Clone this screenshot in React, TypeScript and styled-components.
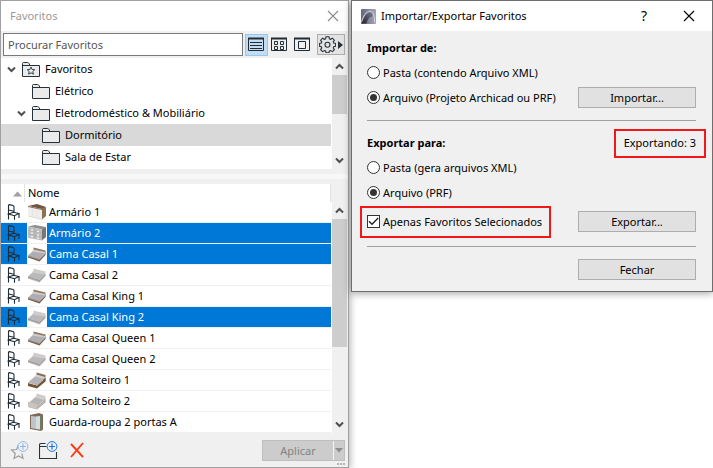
import React from 'react';
import styled, { createGlobalStyle, css } from 'styled-components';

const GlobalStyle = createGlobalStyle`
  *, *::before, *::after { box-sizing: border-box; }
  body { margin: 0; background: #fff; }
  body, button, input { font: 11px/16px "Noto Sans", "Open Sans", sans-serif; color: #000; }
  button { padding: 0; margin: 0; }
  svg { display: block; flex: none; }
`;

const Desktop = styled.main`
  display: flex;
  align-items: flex-start;
  gap: 2px;
  overflow: hidden;
  padding-bottom: 1px;
`;

const Window = styled.section<{ $share: number; $edge: string }>`
  flex: ${(p) => p.$share} 1 0;
  min-width: 0;
  border: 1px solid ${(p) => p.$edge};
  background: #f0f0f0;
  box-shadow: 0 1px 8px rgba(0, 0, 0, 0.4);
`;

const TitleBar = styled.header<{ $inactive?: boolean }>`
  display: flex;
  align-items: center;
  height: 30px;
  padding: 0 8px 0 9px;
  background: #fff;
  color: ${(p) => (p.$inactive ? '#999' : '#000')};
`;

const Title = styled.h1`
  flex: 1;
  margin: 0;
  font: inherit;
  white-space: nowrap;
`;

const TitleButton = styled.button`
  display: grid;
  place-items: center;
  width: 14px;
  height: 20px;
  border: 0;
  background: none;
  color: inherit;
  font-size: 14px;
`;

const DialogButtons = styled.div`
  display: flex;
  gap: 31px;
  margin-right: 8px;
`;

const LogoWrap = styled.span`
  margin-right: 5px;
`;

const Toolbar = styled.div`
  display: flex;
  align-items: center;
  height: 27px;
  padding: 0 3px 0 2px;
`;

const Search = styled.input`
  flex: 1;
  min-width: 0;
  height: 23px;
  margin-right: 2px;
  padding: 0 4px;
  border: 1px solid #7a7a7a;
  background: #fff;
  &::placeholder { color: #555; opacity: 1; }
`;

const ViewButton = styled.button<{ $active?: boolean }>`
  display: grid;
  place-items: center;
  width: 23px;
  height: 22px;
  border: 1px solid ${(p) => (p.$active ? '#90c8f6' : 'transparent')};
  background: ${(p) => (p.$active ? '#c3dcf2' : 'none')};
`;

const GearButton = styled.button`
  display: flex;
  align-items: center;
  justify-content: center;
  gap: 2px;
  width: 28px;
  height: 21px;
  margin-left: 3px;
  border: 1px solid #adadad;
  background: #e3e3e3;
`;

const ScrollArea = styled.div`
  display: flex;
  background: #fff;
`;

const Tree = styled.ul`
  flex: 1;
  min-width: 0;
  margin: 0 1px 1px 0;
  padding: 0;
  list-style: none;
`;

const TreeRow = styled.li<{ $level: number; $selected?: boolean }>`
  display: grid;
  grid-template-columns: 15px 23px 1fr;
  align-items: center;
  height: 22px;
  padding-left: ${(p) => 6 + p.$level * 10}px;
  background: ${(p) => (p.$selected ? '#d9d9d9' : 'none')};
  white-space: nowrap;
`;

const ScrollTrack = styled.div`
  display: flex;
  flex-direction: column;
  width: 16px;
  padding-right: 1px;
  background: #f0f0f0;
`;

const ScrollButton = styled.button`
  display: grid;
  place-items: center;
  height: 17px;
  border: 0;
  background: none;
`;

const ScrollThumb = styled.div<{ $size: number }>`
  flex: ${(p) => p.$size} 1 0;
  background: #cdcdcd;
`;

const ScrollRest = styled.div<{ $size: number }>`
  flex: ${(p) => p.$size} 1 0;
`;

const Splitter = styled.div`
  height: 15px;
  border: solid #f0f0f0;
  border-width: 5px 0;
  background: #f8f8f8;
`;

const ListHeader = styled.div`
  display: grid;
  grid-template-columns: 24px 1fr 17px;
  height: 18px;
  background: #fff;
`;

const SortCell = styled.button`
  display: flex;
  justify-content: flex-end;
  align-items: center;
  padding: 2px 2px 0 0;
  border: 0;
  border-right: 1px solid #e3e3e3;
  background: none;
`;

const HeaderCell = styled.span`
  padding: 1px 3px;
  border-right: 1px solid #e3e3e3;
`;

const HeaderCorner = styled.span`
  background: #f0f0f0;
`;

const ItemTable = styled.table`
  flex: 1;
  min-width: 0;
  margin-right: 1px;
  border-collapse: separate;
  border-spacing: 0;
  table-layout: fixed;
`;

const IconCell = styled.td`
  width: 26px;
  height: 21px;
  padding: 0 0 0 6px;
  border-bottom: 1px solid #f0f0f0;
`;

const ThumbCell = styled.td`
  width: 20px;
  padding: 0;
  border-bottom: 1px solid #f0f0f0;
  background: #fff;
`;

const NameCell = styled.td`
  padding: 0 2px;
  border-bottom: 1px solid #f0f0f0;
  white-space: nowrap;
`;

const ItemRow = styled.tr<{ $selected?: boolean }>`
  ${(p) =>
    p.$selected &&
    css`
      ${IconCell}, ${NameCell} { background: #0078d7; }
      ${NameCell} { color: #fff; }
    `}
`;

const Footer = styled.footer`
  position: relative;
  display: flex;
  align-items: center;
  gap: 11px;
  height: 34px;
  padding: 0 3px 0 9px;
`;

const ToolButton = styled.button`
  display: grid;
  place-items: center;
  width: 18px;
  height: 20px;
  border: 0;
  background: none;
`;

const ApplyButton = styled.button`
  display: flex;
  align-items: stretch;
  width: 83px;
  height: 21px;
  margin-left: auto;
  border: 1px solid #bfbfbf;
  background: #ccc;
  color: #838383;
  line-height: 19px;
`;

const ApplyText = styled.span`
  flex: 1;
  border-right: 1px solid #f4f4f4;
`;

const ApplyArrow = styled.span`
  display: grid;
  place-items: center;
  width: 10px;
`;

const Grip = styled.span`
  position: absolute;
  right: 3px;
  bottom: 2px;
`;

const DialogBody = styled.form`
  padding: 4px 15px 11px;
  padding-right: 16px;
`;

const Group = styled.div<{ $last?: boolean }>`
  padding-bottom: ${(p) => (p.$last ? 8 : 10)}px;
  margin-bottom: ${(p) => (p.$last ? 12 : 9)}px;
  border-bottom: 1px solid #a0a0a0;
`;

const FormRow = styled.div<{ $tall?: boolean }>`
  display: flex;
  align-items: center;
  justify-content: space-between;
  height: ${(p) => (p.$tall ? 33 : 25)}px;
`;

const GroupTitle = styled.h2`
  margin: 0;
  font-size: 11px;
  line-height: 16px;
  font-weight: 700;
`;

const Choice = styled.label`
  display: flex;
  align-items: center;
  gap: 3px;
  white-space: nowrap;
`;

const RadioInput = styled.input`
  appearance: none;
  display: grid;
  place-items: center;
  width: 13px;
  height: 13px;
  margin: 0;
  border: 1px solid #333;
  border-radius: 50%;
  background: #fff;
  &:checked::before {
    content: '';
    width: 7px;
    height: 7px;
    border-radius: 50%;
    background: #333;
  }
`;

const CheckInput = styled.input`
  appearance: none;
  display: grid;
  place-items: center;
  width: 13px;
  height: 13px;
  margin: 0;
  border: 1px solid #333;
  background: #fff;
  &:checked::before {
    content: '';
    width: 11px;
    height: 11px;
    background: #222;
    clip-path: polygon(4% 52%, 13% 43%, 36% 66%, 88% 14%, 97% 23%, 36% 84%);
  }
`;

const Marked = styled.div<{ $wide?: boolean }>`
  position: relative;
  &::after {
    content: '';
    position: absolute;
    inset: ${(p) => (p.$wide ? '-8px -9px -8px -7px' : '-6px -10px -7px')};
    border: 2px solid #f01818;
    pointer-events: none;
  }
`;

const PushButton = styled.button`
  width: 118px;
  height: 21px;
  border: 1px solid #adadad;
  background: #e1e1e1;
  line-height: 19px;
`;

const Actions = styled.div`
  display: flex;
  justify-content: flex-end;
`;

const CloseIcon = ({ color }: { color: string }) => (
  <svg width="12" height="12" viewBox="0 0 12 12" stroke={color} strokeWidth="1.1">
    <path d="M1 1l10 10M11 1L1 11" />
  </svg>
);

const Chevron = ({ up }: { up?: boolean }) => (
  <svg width="9" height="7" viewBox="0 0 9 7" fill="none" stroke="#505050" strokeWidth="2">
    <path d={up ? 'M1 5.5l3.5-3.5L8 5.5' : 'M1 1.5L4.5 5 8 1.5'} />
  </svg>
);

const FolderIcon = ({ star }: { star?: boolean }) => (
  <svg width="18" height="15" viewBox="0 0 18 15" fill="#ebebeb" stroke="#26323a">
    <path d="M.5 14.5V1.5Q.5.5 1.5.5H5.500Q6.500.5 7 1.500L8 3.500H17.500V14.500Z" />
    <path d="M.5 3.500H8" />
    {star && (
      <path
        d="M9 5l1.100 2.500 2.700.2-2 1.800.6 2.700L9 10.800l-2.400 1.400.6-2.700-2-1.800 2.700-.2z"
        strokeWidth=".9"
      />
    )}
  </svg>
);

const ViewIcon = ({ kind }: { kind: 'list' | 'grid' | 'single' }) => (
  <svg width="17" height="15" viewBox="0 0 17 15" fill="none" stroke="#1f2c35">
    <path d="M.5 1.500h15v12H.5z" />
    <path d="M0 1.500h16" strokeWidth="2" />
    {kind === 'list' && <path d="M2 5.500h12M2 8.500h12M2 11.500h12" />}
    {kind === 'grid' && (
      <path d="M3.500 4.500h3v3h-3zM9.500 4.500h3v3h-3zM3.500 9.500h3v3h-3zM9.500 9.500h3v3h-3z" />
    )}
    {kind === 'single' && <path d="M4.500 4.500h7v7h-7z" />}
  </svg>
);

const GearIcon = () => (
  <svg width="17" height="17" viewBox="0 0 17 17" fill="none" stroke="#26323a">
    <path
      d="M7 .8h3l.4 2 1.200.5 1.800-1.100 2 2-1.200 1.700.5 1.200 1.900.4v2.800l-1.900.4-.5 1.200 1.200 1.700-2 2-1.800-1.100-1.200.5-.4 1.700H7l-.4-1.700-1.200-.5-1.800 1.100-2-2 1.200-1.700-.5-1.200L.6 10.300V7.500l1.700-.4.5-1.200L1.600 4.200l2-2 1.800 1.100 1.200-.5z"
      strokeWidth="1.100"
    />
    <circle cx="8.500" cy="8.800" r="2.500" strokeWidth="1.100" />
  </svg>
);

const ChairIcon = () => (
  <svg width="13" height="16" viewBox="0 0 13 16" fill="none" stroke="#1f2c35" strokeWidth="1.100">
    <path d="M1.500 15.500V1.500Q1.600.6 2.500.6L6 1.500Q7 1.900 7 3V8.500" />
    <path d="M1.500 6L7 7.300" />
    <path d="M1.500 10L6.500 8.300 12 9.500 7.500 11.700ZM7.500 11.700V15.800M12 9.500V14" />
  </svg>
);

type ThumbKind = 'cabinet' | 'dresser' | 'woodBed' | 'grayBed' | 'woodSingle' | 'graySingle' | 'wardrobe';

const DoubleBed = ({ wood }: { wood: boolean }) => (
  <>
    <path d="M6.500 3.500L18.500 6.500V10L6.500 8z" fill={wood ? '#94795e' : '#d3cbc3'} />
    <path d="M1 11.500L12.500 15 18.500 9.500V11L12.500 17.500 1 13.500z" fill={wood ? '#7c5f42' : '#bdb4ad'} />
    <path d="M1 11.500L6.500 6.500 18.500 9 12.500 15z" fill={wood ? '#adadb3' : '#b9b9bb'} />
    <path d="M6.500 5.500L18 8v1.500L5 7.500z" fill="#cdcdd0" />
    <path d="M1 11.500L12.500 15 18.500 9v1L12.500 16 1 12.500z" fill="#96969b" />
  </>
);

const SingleBed = ({ wood }: { wood: boolean }) => (
  <>
    <path d="M9.500 2.500L18.500 5V11L9.500 8z" fill={wood ? '#8a6c50' : '#d3cbc3'} />
    <path d="M1 13L10 15.500 18.500 8V11.500L10 18.500 1 16z" fill={wood ? '#745538' : '#b8afa8'} />
    <path d="M1 12.500L9.500 5 18.500 7.500 10 15.500z" fill={wood ? '#b3b3b8' : '#b5b5b8'} />
    <path d="M9.500 4.500L18 7l-1.500 2L8 6.500z" fill="#cfcfd2" />
    {!wood && <path d="M1 10.500L10 13v5L1 16z" fill="#cbc3bc" />}
  </>
);

const Thumb = ({ kind }: { kind: ThumbKind }) => (
  <svg width="20" height="20" viewBox="0 0 20 20">
    {kind === 'cabinet' && (
      <>
        <path d="M1 4L10 2l9 3-4 2.500z" fill="#6f573f" />
        <path d="M15 7l4-2V14l-4 3.500z" fill="#8b7153" />
        <path d="M1 4l14 3v10.500L1.500 14z" fill="#f0eeec" />
        <path d="M1 4l14 3v1L1 5z" fill="#8b735a" />
        <path d="M5.500 6v8.500M10 7v8.500" stroke="#e2dfdc" strokeWidth=".7" />
        <path d="M1.500 14L15 17.500" stroke="#d0cbc6" strokeWidth=".7" />
      </>
    )}
    {kind === 'dresser' && (
      <>
        <path d="M1 3.500L8 2l11 2-3 2.500z" fill="#8e8e8e" />
        <path d="M15 6.500l4-2.500V14l-4 3.500z" fill="#777" />
        <path d="M1 3.500L15 6.500v11L1 15z" fill="#bebebe" />
        <path d="M1.500 7.500l13.500 2.500M1.500 11l13.500 2.500M8 5v11" stroke="#a4a4a4" strokeWidth=".5" />
        <path d="M4 7l2 .3M10 8.500l2 .3M4 10l2 .3M10 12l2 .3M4 13.500l2 .3M10 15l2 .3" stroke="#fff" />
      </>
    )}
    {kind === 'wardrobe' && (
      <>
        <path d="M3 3l9-2 4 1.500v15L14 19 3 17z" fill="#816956" />
        <path d="M4 4l5 .5v12.500L4 16z" fill="#bfc4c8" />
        <path d="M9 4.500l4-.5v13.500L9 17z" fill="#d8dcdf" />
        <path d="M13.500 4l.8-.5v14l-.8.5z" fill="#4e9b70" />
      </>
    )}
    {(kind === 'woodBed' || kind === 'grayBed') && <DoubleBed wood={kind === 'woodBed'} />}
    {(kind === 'woodSingle' || kind === 'graySingle') && <SingleBed wood={kind === 'woodSingle'} />}
  </svg>
);

const LogoIcon = () => (
  <svg width="15" height="15" viewBox="0 0 15 15">
    <defs>
      <linearGradient id="logoFill" x1="0" y1="0" x2="1" y2="0">
        <stop offset="0" stopColor="#66667c" />
        <stop offset="1" stopColor="#a3a5b8" />
      </linearGradient>
      <linearGradient id="logoArch" x1="0" y1="1" x2="1" y2="0">
        <stop offset="0" stopColor="#24242c" />
        <stop offset="1" stopColor="#77778a" />
      </linearGradient>
    </defs>
    <rect width="15" height="15" rx="1" fill="url(#logoFill)" />
    <path d="M.5 14.500C3 8 5.500 3.500 9.500 3.500c1.500.5 2 2 2 4C8 7.500 6.500 11 5.500 14.500z" fill="url(#logoArch)" />
    <path d="M.5 13C2.500 7 5 2.300 9 2.200c3.500.1 4.300 4 4.500 11.300" fill="none" stroke="#dcdce6" strokeWidth=".9" />
  </svg>
);

const AddBadge = () => (
  <>
    <circle cx="13" cy="5.500" r="4.900" fill="#f0f0f0" stroke="#1675e8" />
    <path d="M13 2.500v6M10 5.500h6" stroke="#1675e8" strokeWidth="1.200" />
  </>
);

const AddStarIcon = () => (
  <svg width="19" height="19" viewBox="0 0 19 19" fill="none" opacity=".45">
    <path d="M8.500 4L6.500 8.500 1.500 9l3.800 3.500L4 17.500l4.500-2.500 4.500 2.500-1.200-5" stroke="#333" strokeWidth="1.100" />
    <AddBadge />
  </svg>
);

const AddFolderIcon = () => (
  <svg width="19" height="19" viewBox="0 0 19 19" fill="none">
    <path d="M7.500 5.500H.5M6.500 2.500H2Q.5 2.500.5 4V17.500H17.500V11" stroke="#26323a" strokeWidth="1.100" />
    <AddBadge />
  </svg>
);

interface ScrollbarProps {
  thumb: number;
  rest: number;
}

const Scrollbar = ({ thumb, rest }: ScrollbarProps) => (
  <ScrollTrack>
    <ScrollButton type="button" aria-label="Rolar para cima"><Chevron up /></ScrollButton>
    <ScrollThumb $size={thumb} />
    <ScrollRest $size={rest} />
    <ScrollButton type="button" aria-label="Rolar para baixo"><Chevron /></ScrollButton>
  </ScrollTrack>
);

const folders = [
  { name: 'Favoritos', level: 0, open: true, star: true },
  { name: 'Elétrico', level: 1 },
  { name: 'Eletrodoméstico & Mobiliário', level: 1, open: true },
  { name: 'Dormitório', level: 2, selected: true },
  { name: 'Sala de Estar', level: 2 },
];

const items: { name: string; kind: ThumbKind; selected?: boolean }[] = [
  { name: 'Armário 1', kind: 'cabinet' },
  { name: 'Armário 2', kind: 'dresser', selected: true },
  { name: 'Cama Casal 1', kind: 'woodBed', selected: true },
  { name: 'Cama Casal 2', kind: 'grayBed' },
  { name: 'Cama Casal King 1', kind: 'woodBed' },
  { name: 'Cama Casal King 2', kind: 'grayBed', selected: true },
  { name: 'Cama Casal Queen 1', kind: 'woodBed' },
  { name: 'Cama Casal Queen 2', kind: 'grayBed' },
  { name: 'Cama Solteiro 1', kind: 'woodSingle' },
  { name: 'Cama Solteiro 2', kind: 'graySingle' },
  { name: 'Guarda-roupa 2 portas A', kind: 'wardrobe' },
];

const FavoritesWindow = () => (
  <Window $share={349} $edge="#a0a0a0">
    <TitleBar $inactive>
      <Title>Favoritos</Title>
      <TitleButton type="button" aria-label="Fechar Favoritos"><CloseIcon color="#8c8c8c" /></TitleButton>
    </TitleBar>
    <Toolbar>
      <Search type="search" aria-label="Procurar Favoritos" placeholder="Procurar Favoritos" />
      <ViewButton type="button" $active aria-label="Lista"><ViewIcon kind="list" /></ViewButton>
      <ViewButton type="button" aria-label="Grade"><ViewIcon kind="grid" /></ViewButton>
      <ViewButton type="button" aria-label="Miniatura"><ViewIcon kind="single" /></ViewButton>
      <GearButton type="button" aria-label="Opções">
        <GearIcon />
        <svg width="5" height="8" viewBox="0 0 5 8" fill="#26323a"><path d="M0 0l5 4-5 4z" /></svg>
      </GearButton>
    </Toolbar>
    <ScrollArea>
      <Tree>
        {folders.map((f) => (
          <TreeRow key={f.name} $level={f.level} $selected={f.selected}>
            <span>{f.open && <Chevron />}</span>
            <FolderIcon star={f.star} />
            <span>{f.name}</span>
          </TreeRow>
        ))}
      </Tree>
      <Scrollbar thumb={39} rest={38} />
    </ScrollArea>
    <Splitter />
    <ListHeader>
      <SortCell type="button" aria-label="Ordenar">
        <svg width="9" height="6" viewBox="0 0 9 6" fill="#a0a0a0"><path d="M0 5.500L4.500.5 9 5.500z" /></svg>
      </SortCell>
      <HeaderCell>Nome</HeaderCell>
      <HeaderCorner />
    </ListHeader>
    <ScrollArea>
      <ItemTable>
        <tbody>
          {items.map((item) => (
            <ItemRow key={item.name} $selected={item.selected}>
              <IconCell><ChairIcon /></IconCell>
              <ThumbCell><Thumb kind={item.kind} /></ThumbCell>
              <NameCell>{item.name}</NameCell>
            </ItemRow>
          ))}
        </tbody>
      </ItemTable>
      <Scrollbar thumb={128} rest={69} />
    </ScrollArea>
    <Footer>
      <ToolButton type="button" aria-label="Novo favorito"><AddStarIcon /></ToolButton>
      <ToolButton type="button" aria-label="Nova pasta"><AddFolderIcon /></ToolButton>
      <ToolButton type="button" aria-label="Apagar">
        <svg width="14" height="16" viewBox="0 0 14 16" stroke="#f83c14" strokeWidth="1.900">
          <path d="M1 2l12 13M13 1L1 15" />
        </svg>
      </ToolButton>
      <ApplyButton type="button" disabled>
        <ApplyText>Aplicar</ApplyText>
        <ApplyArrow>
          <svg width="8" height="5" viewBox="0 0 8 5" fill="#8c8c8c"><path d="M0 0h8L4 4.500z" /></svg>
        </ApplyArrow>
      </ApplyButton>
      <Grip>
        <svg width="8" height="2" viewBox="0 0 8 2" fill="#b4b4b4"><path d="M0 0h2v2H0zM3 0h2v2H3zM6 0h2v2H6z" /></svg>
      </Grip>
    </Footer>
  </Window>
);

const TransferDialog = () => (
  <Window $share={362} $edge="#6e6e6e">
    <TitleBar>
      <LogoWrap><LogoIcon /></LogoWrap>
      <Title>Importar/Exportar Favoritos</Title>
      <DialogButtons>
        <TitleButton type="button" aria-label="Ajuda">?</TitleButton>
        <TitleButton type="button" aria-label="Fechar janela"><CloseIcon color="#000" /></TitleButton>
      </DialogButtons>
    </TitleBar>
    <DialogBody>
      <Group>
        <FormRow><GroupTitle>Importar de:</GroupTitle></FormRow>
        <FormRow>
          <Choice><RadioInput type="radio" name="import" />Pasta (contendo Arquivo XML)</Choice>
        </FormRow>
        <FormRow>
          <Choice><RadioInput type="radio" name="import" defaultChecked />Arquivo (Projeto Archicad ou PRF)</Choice>
          <PushButton type="button">Importar...</PushButton>
        </FormRow>
      </Group>
      <Group $last>
        <FormRow>
          <GroupTitle>Exportar para:</GroupTitle>
          <Marked>Exportando: 3</Marked>
        </FormRow>
        <FormRow>
          <Choice><RadioInput type="radio" name="export" />Pasta (gera arquivos XML)</Choice>
        </FormRow>
        <FormRow>
          <Choice><RadioInput type="radio" name="export" defaultChecked />Arquivo (PRF)</Choice>
        </FormRow>
        <FormRow $tall>
          <Marked $wide>
            <Choice><CheckInput type="checkbox" defaultChecked />Apenas Favoritos Selecionados</Choice>
          </Marked>
          <PushButton type="button">Exportar...</PushButton>
        </FormRow>
      </Group>
      <Actions><PushButton type="button">Fechar</PushButton></Actions>
    </DialogBody>
  </Window>
);

export default function App() {
  return (
    <>
      <GlobalStyle />
      <Desktop>
        <FavoritesWindow />
        <TransferDialog />
      </Desktop>
    </>
  );
}
